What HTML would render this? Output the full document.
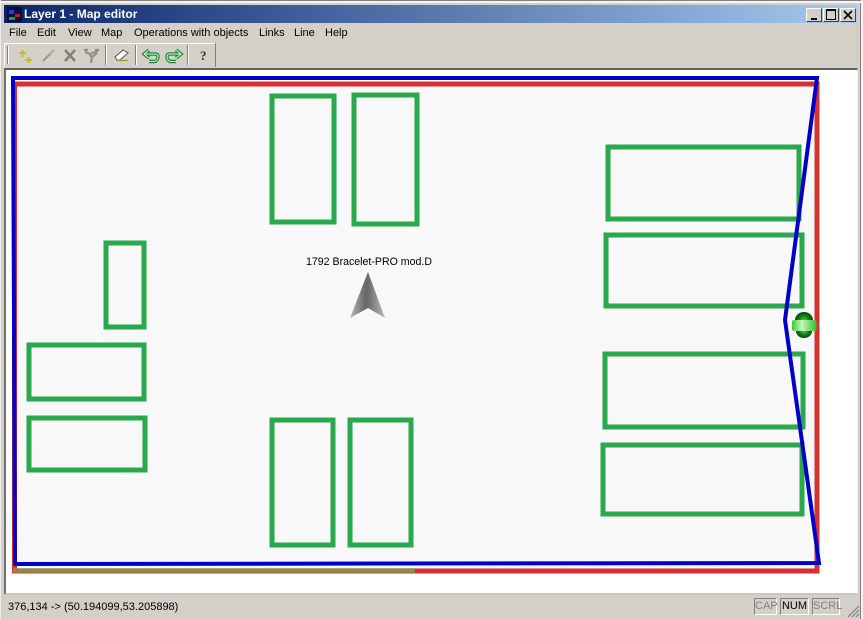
<!DOCTYPE html>
<html><head><meta charset="utf-8">
<style>
html,body{margin:0;padding:0;background:#d4d0c8;}
body{width:863px;height:619px;position:relative;overflow:hidden;font-family:"Liberation Sans",sans-serif;}
.a{position:absolute;}
.m{position:absolute;top:26px;font-size:11px;line-height:14px;color:#000;white-space:nowrap;}
.b{position:absolute;top:8px;width:14px;height:12px;background:#d4d0c8;border-top:1px solid #fff;border-left:1px solid #fff;border-right:1px solid #404040;border-bottom:1px solid #404040;}
.s{position:absolute;top:598px;height:15px;font-size:11px;line-height:15px;text-align:center;border:1px solid;border-color:#808080 #fff #fff #808080;}
</style></head><body>
<div class="a" style="left:0;top:0;width:863px;height:1px;background:#808080"></div>
<div class="a" style="left:0;top:1px;width:863px;height:2px;background:#f4f4f4"></div>
<div class="a" style="left:0;top:0;width:1px;height:619px;background:#eee"></div>
<div class="a" style="left:860px;top:3px;width:1px;height:616px;background:#808080"></div>
<div class="a" style="left:861px;top:0;width:2px;height:619px;background:#f4f4f4"></div>
<div class="a" style="left:4px;top:5px;width:853px;height:18px;background:linear-gradient(90deg,#0a246a,#a6caf0)"></div>
<svg class="a" style="left:7px;top:7px" width="15" height="15"><rect width="15" height="15" fill="#0a0f3a"/><rect x="2" y="3" width="5" height="4" fill="#2040d0"/><rect x="8" y="7" width="5" height="3" fill="#c02020"/><rect x="2" y="10" width="6" height="3" fill="#20a040"/></svg>
<div class="a" style="left:24px;top:7px;font-size:12px;font-weight:bold;line-height:14px;color:#fff;white-space:nowrap">Layer 1 - Map editor</div>
<div class="b" style="left:806px"><div class="a" style="left:4px;top:9px;width:6px;height:2px;background:#000"></div></div>
<div class="b" style="left:823px"><div class="a" style="left:2px;top:0;width:8px;height:8px;border:1px solid #000;border-top-width:2px"></div></div>
<div class="b" style="left:840px"><svg class="a" style="left:2px;top:1px" width="11" height="10"><path d="M1 1L9 9M9 1L1 9" stroke="#000" stroke-width="1.6"/></svg></div>
<div class="m" style="left:9px">File</div>
<div class="m" style="left:37px">Edit</div>
<div class="m" style="left:68px">View</div>
<div class="m" style="left:101px">Map</div>
<div class="m" style="left:134px">Operations with objects</div>
<div class="m" style="left:259px">Links</div>
<div class="m" style="left:294px">Line</div>
<div class="m" style="left:325px">Help</div>
<div class="a" style="left:4px;top:43px;width:211px;height:1px;background:#fff"></div>
<div class="a" style="left:4px;top:43px;width:1px;height:24px;background:#fff"></div>
<div class="a" style="left:215px;top:43px;width:1px;height:24px;background:#808080"></div>
<div class="a" style="left:7px;top:46px;width:1px;height:18px;background:#808080"></div>
<div class="a" style="left:8px;top:46px;width:1px;height:18px;background:#fff"></div>
<div class="a" style="left:105px;top:45px;width:1px;height:20px;background:#808080"></div>
<div class="a" style="left:106px;top:45px;width:1px;height:20px;background:#fff"></div>
<div class="a" style="left:135px;top:45px;width:1px;height:20px;background:#808080"></div>
<div class="a" style="left:136px;top:45px;width:1px;height:20px;background:#fff"></div>
<div class="a" style="left:187px;top:45px;width:1px;height:20px;background:#808080"></div>
<div class="a" style="left:188px;top:45px;width:1px;height:20px;background:#fff"></div>
<svg class="a" style="left:0;top:40px" width="216" height="28" fill="none">
<path d="M19 13h7M22.500 10v7M25 20h7M28.500 17v6" stroke="#c8b820" stroke-width="1.800"/>
<path d="M43 21L50 14" stroke="#909090" stroke-width="1.800"/><path d="M50 14L54 10" stroke="#a8a8a8" stroke-width="2"/>
<path d="M65 10L75 21M75 10L65 21" stroke="#808080" stroke-width="2.600"/>
<path d="M85 12l5 2 8-3M90 14l1 3M91 23l1-6 5-4M84 10h4M95 10h4" stroke="#909090" stroke-width="2.200"/>
<path d="M115 17l8-7 5 3-8 7h-3z" fill="#fff" stroke="#555"/><path d="M117 20.500h11" stroke="#a0a020" stroke-width="1.200"/>
<path d="M149 10l-5 4 5 4M145 14h10q3 0 3 3t-3 4.500h-6" stroke="#1e8c3a" stroke-width="3.400"/>
<path d="M149 10l-5 4 5 4M145 14h10q3 0 3 3t-3 4.500h-6" stroke="#d8f0d8" stroke-width="1"/>
<path d="M176 10l5 4-5 4M180 14h-10q-3 0-3 3t3 4.500h6" stroke="#1e8c3a" stroke-width="3.400"/>
<path d="M176 10l5 4-5 4M180 14h-10q-3 0-3 3t3 4.500h6" stroke="#d8f0d8" stroke-width="1"/>
</svg>
<div class="a" style="left:200px;top:48px;font-size:13px;font-family:'Liberation Serif',serif;font-weight:bold;line-height:15px;color:#303030">?</div>
<div class="a" style="left:4px;top:68px;width:854px;height:527px;background:#fff;box-sizing:border-box;border-top:2px solid #606060;border-left:2px solid #707070;border-right:1px solid #f0f0f0;border-bottom:2px solid #c8c6c0"></div>
<svg class="a" style="left:0;top:0" width="863" height="619" fill="none">
<defs><linearGradient id="g" x1="0" x2="1" y1="0" y2="0"><stop offset="0" stop-color="#b8b8b8"/><stop offset=".45" stop-color="#666"/><stop offset=".55" stop-color="#707070"/><stop offset="1" stop-color="#bcbcbc"/></linearGradient>
<linearGradient id="h" x1="0" x2="1" y1="0" y2="0"><stop offset="0" stop-color="#38c838"/><stop offset=".4" stop-color="#c8f8b8"/><stop offset="1" stop-color="#30c030"/></linearGradient>
<radialGradient id="d"><stop offset="0" stop-color="#50c050"/><stop offset=".6" stop-color="#0c7a10"/><stop offset="1" stop-color="#064808"/></radialGradient></defs>
<rect x="14" y="84" width="803" height="487" fill="#f8f8f8"/>
<rect x="14.500" y="84" width="802.500" height="487" stroke="#d83030" stroke-width="5"/>
<path d="M13 570.500H415" stroke="#8a8a4a" stroke-width="4.500"/>
<g stroke="#2aa84c" stroke-width="5">
<rect x="272" y="96" width="62" height="126"/>
<rect x="354" y="95" width="63" height="129"/>
<rect x="608" y="147" width="191" height="72"/>
<rect x="606" y="235" width="196" height="71"/>
<rect x="605" y="354" width="198" height="73"/>
<rect x="603" y="445" width="199" height="69"/>
<rect x="106" y="243" width="38" height="84"/>
<rect x="29" y="345" width="115" height="54"/>
<rect x="29" y="418" width="116" height="52"/>
<rect x="272" y="420" width="61" height="125"/>
<rect x="350" y="420" width="61" height="125"/>
</g>
<path d="M13 78H817L785 320L819 563L15 564Z" stroke="#0000c8" stroke-width="4"/>
<path d="M368 272L350 318L368 308L385 318Z" fill="url(#g)"/>
<ellipse cx="804" cy="320" rx="9" ry="8" fill="url(#d)"/>
<ellipse cx="804" cy="331" rx="8" ry="7" fill="url(#d)"/>
<rect x="792" y="320" width="24.500" height="11" rx="2" fill="url(#h)"/>
</svg>
<div class="a" style="left:306px;top:256px;font-size:10.600px;line-height:13px;color:#000;white-space:nowrap">1792 Bracelet-PRO mod.D</div>
<div class="a" style="left:8px;top:600px;font-size:11px;line-height:14px;color:#000;white-space:nowrap">376,134 -&gt; (50.194099,53.205898)</div>
<div class="s" style="left:754px;width:21px;color:#808080">CAP</div>
<div class="s" style="left:780px;width:27px;color:#000">NUM</div>
<div class="s" style="left:812px;width:26px;color:#808080">SCRL</div>
<svg class="a" style="left:846px;top:604px" width="14" height="14"><path d="M13 2L2 13M13 6L6 13M13 10L10 13" stroke="#808080" stroke-width="1.200"/></svg>
</body></html>
